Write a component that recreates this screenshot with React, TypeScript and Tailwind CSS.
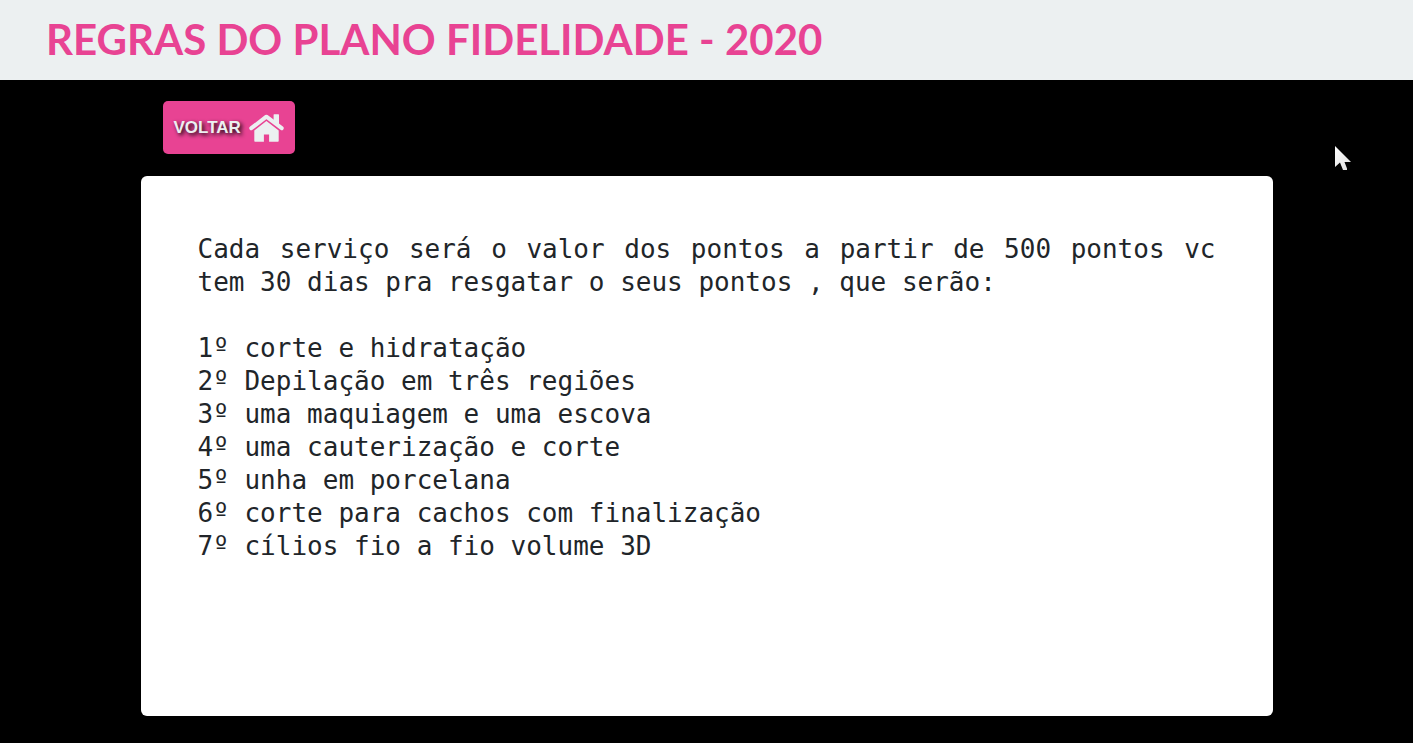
const rewards = [
  "1º corte e hidratação",
  "2º Depilação em três regiões",
  "3º uma maquiagem e uma escova",
  "4º uma cauterização e corte",
  "5º unha em porcelana",
  "6º corte para cachos com finalização",
  "7º cílios fio a fio volume 3D",
];

function HomeIcon() {
  return (
    <svg
      className="h-7 w-[35px]"
      viewBox="0 0 35 28"
      fill="currentColor"
      aria-hidden="true"
    >
      <path
        d="M2.3 14.2 L17.4 2.7 L32.7 14.2"
        fill="none"
        stroke="currentColor"
        strokeWidth="4"
        strokeLinecap="round"
        strokeLinejoin="round"
      />
      <path d="M25.2 0.2 H29.4 Q30 0.2 30 0.8 V12 L24.6 8 V0.8 Q24.6 0.2 25.2 0.2 Z" />
      <path d="M17.4 7.1 L29.7 16.4 V26.9 Q29.7 27.7 28.9 27.7 H20.1 V20.4 H14.9 V27.7 H6.1 Q5.3 27.7 5.3 26.9 V16.4 Z" />
    </svg>
  );
}

function Pointer() {
  return (
    <svg
      className="pointer-events-none absolute top-[146px] right-[62px] h-6 w-4"
      viewBox="0 0 16 24"
      aria-hidden="true"
    >
      <defs>
        <linearGradient id="pointer-fill" x1="0" y1="0" x2="1" y2="1">
          <stop offset="0" stopColor="#ffffff" />
          <stop offset="1" stopColor="#dcdcdc" />
        </linearGradient>
      </defs>
      <path
        d="M0 0 L16 16 H9.5 L12 22.5 V24 H8 L5 16.5 L0 21 Z"
        fill="url(#pointer-fill)"
      />
    </svg>
  );
}

export default function App() {
  return (
    <div className="relative flex min-h-screen flex-col bg-black">
      <header className="flex h-20 items-center bg-[#ecf0f1] px-[46px] pb-[2px]">
        <h1 className="font-['Lato',sans-serif] text-[42px] leading-none font-bold text-[#e84393]">
          REGRAS DO PLANO FIDELIDADE - 2020
        </h1>
      </header>

      <main className="mx-auto w-full max-w-[1132px] pt-[21px] pb-7">
        <a
          href="#inicio"
          className="ml-[22px] inline-flex h-[53px] items-center gap-2 rounded-[5px] bg-[#e84393] px-[11px] align-top font-['Liberation_Sans',sans-serif] text-[17px] font-bold text-[#ecf0f1]"
        >
          <span className="[text-shadow:2px_2px_4px_#000]">VOLTAR</span>
          <HomeIcon />
        </a>

        <section className="mt-[22px] min-h-[540px] rounded-[6px] bg-white p-[57px] text-justify font-['DejaVu_Sans_Mono',monospace] text-[26px] leading-[33px] text-[#212529]">
          <p>
            Cada serviço será o valor dos pontos a partir de 500 pontos vc tem
            30 dias pra resgatar o seus pontos , que serão:
          </p>
          <ul className="mt-[33px]">
            {rewards.map((reward) => (
              <li key={reward}>{reward}</li>
            ))}
          </ul>
        </section>
      </main>

      <Pointer />
    </div>
  );
}
